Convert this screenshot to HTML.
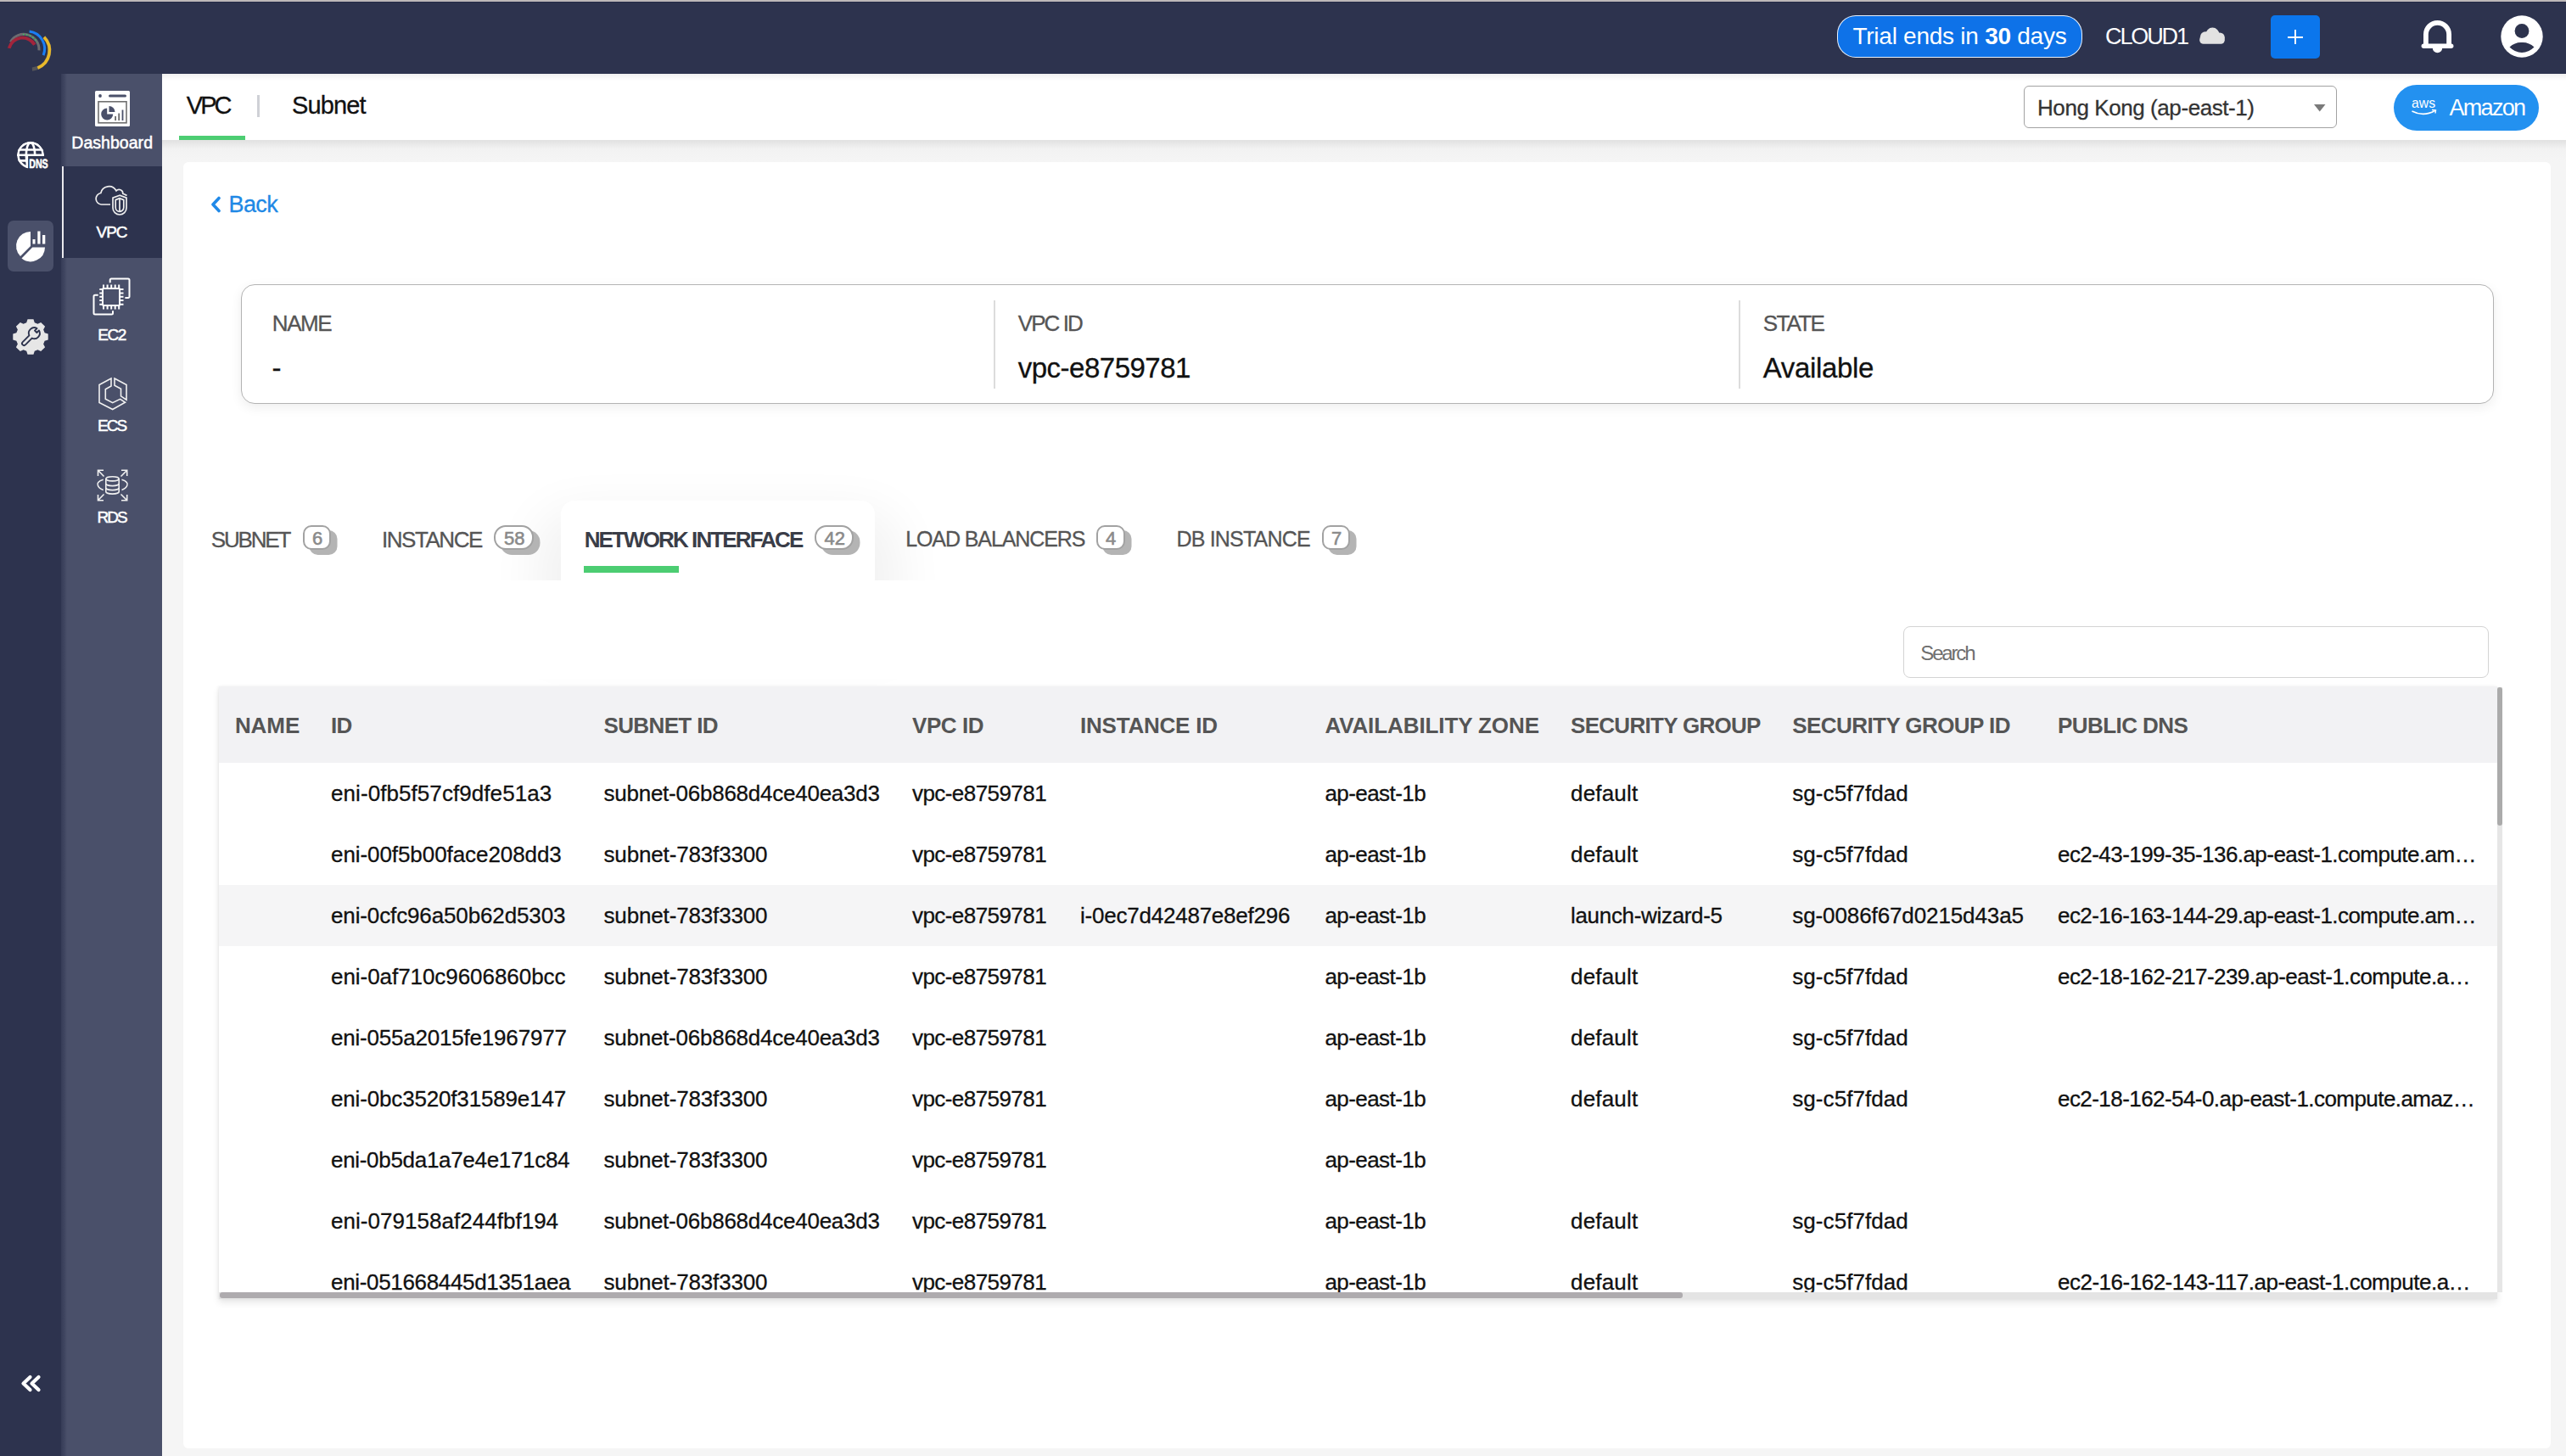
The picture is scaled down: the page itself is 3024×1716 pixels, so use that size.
<!DOCTYPE html>
<html><head><meta charset="utf-8"><style>
html,body{margin:0;padding:0;}
body{width:3024px;height:1716px;position:relative;overflow:hidden;background:#f5f5f5;font-family:"Liberation Sans",sans-serif;}
.t{position:absolute;white-space:nowrap;}
svg{overflow:visible}
</style></head><body>
<div style="position:absolute;left:0px;top:0px;width:3024px;height:2px;background:#bdb8b9"></div>
<div style="position:absolute;left:0px;top:2px;width:3024px;height:85px;background:#2d334e"></div>
<div style="position:absolute;left:0px;top:2px;width:3024px;height:1px;background:#242a46"></div>
<div style="position:absolute;left:0px;top:87px;width:72px;height:1629px;background:#2d334e"></div>
<div style="position:absolute;left:72px;top:87px;width:119px;height:1629px;background:#4a506a"></div>
<div style="position:absolute;left:72px;top:87px;width:7px;height:1629px;background:linear-gradient(90deg,#363c57,#3f4560 55%,#4a506a)"></div>
<div style="position:absolute;left:191px;top:87px;width:2833px;height:78px;background:#fff"></div>
<div style="position:absolute;left:191px;top:87px;width:2833px;height:8px;background:linear-gradient(#f0f0f0,#fff)"></div>
<div style="position:absolute;left:191px;top:165px;width:2833px;height:26px;background:linear-gradient(#e1e1e1,#f2f2f2 40%,#f5f5f5)"></div>
<div style="position:absolute;left:216px;top:191px;width:2790px;height:1516px;background:#fff;border-radius:6px"></div>
<svg style="position:absolute;left:0px;top:0px" width="72" height="87" viewBox="0 0 72 87"><path d="M12.4 49.4 A18 18 0 0 1 46 59.3" stroke="#6c6c70" stroke-width="3" fill="none"/><path d="M27 40.6 A18 18 0 0 1 44 50" stroke="#39c463" stroke-width="1.6" fill="none" stroke-dasharray="1.5 2.5"/><path d="M10.7 56.9 A16.4 16.4 0 0 1 40.8 52.7" stroke="#a3243b" stroke-width="3.8" fill="none"/><path d="M34.6 37.1 A20.5 20.5 0 0 1 51.1 65.1" stroke="#1a7ef5" stroke-width="3" fill="none"/><path d="M51.9 43.7 A22.3 22.3 0 0 1 37.9 81.6" stroke="#555559" stroke-width="4.2" fill="none"/><path d="M51.9 43.7 A22.3 22.3 0 0 1 44.4 80.1" stroke="#e9b92a" stroke-width="3.6" fill="none"/></svg>
<div style="position:absolute;left:2165px;top:18px;width:289px;height:50px;background:#0e72e8;border:1.7px solid rgba(255,255,255,.9);border-radius:22px;box-sizing:border-box"></div>
<div class="t" style="left:2183.5px;top:28.7px;font-size:28px;line-height:28px;color:#fff;font-weight:400;letter-spacing:-0.26px;">Trial ends in <b>30</b> days</div>
<div class="t" style="left:2481.0px;top:29.8px;font-size:27px;line-height:27px;color:#fff;font-weight:400;letter-spacing:-2.11px;">CLOUD1</div>
<svg style="position:absolute;left:2590px;top:32px" width="36" height="21" viewBox="0 0 36 21"><circle cx="17.4" cy="8.6" r="8" fill="#e2e2e2"/><circle cx="9" cy="11.2" r="6" fill="#e2e2e2"/><circle cx="26" cy="12.2" r="5.8" fill="#e2e2e2"/><rect x="2.2" y="10" width="29.6" height="9.8" rx="4.5" fill="#e2e2e2"/></svg>
<div style="position:absolute;left:2676px;top:18px;width:58px;height:51px;background:#0b76ec;border-radius:5px"></div>
<div style="position:absolute;left:2703.9px;top:35px;width:2.299999999999727px;height:17px;background:#fff"></div>
<div style="position:absolute;left:2696px;top:42.6px;width:18px;height:2.1000000000000014px;background:#fff"></div>
<svg style="position:absolute;left:2855px;top:24px" width="35" height="40" viewBox="0 0 35 40"><path d="M3.9 28 V16.5 A13.6 13.6 0 0 1 31.1 16.5 V28" stroke="#fff" stroke-width="5.8" fill="none"/><rect x="-1.4" y="27.5" width="37.8" height="5.5" rx="2.75" fill="#fff"/><path d="M11.8 32.5 A5.7 5.7 0 0 0 23.2 32.5 Z" fill="#fff"/></svg>
<svg style="position:absolute;left:2947px;top:18px" width="50" height="50" viewBox="0 0 50 50"><circle cx="25" cy="25" r="24.7" fill="#fff"/><circle cx="25" cy="18.5" r="8.4" fill="#2d334d"/><path d="M10.5 37.5 Q17 31.5 25 32 Q33 31.5 39.5 37.5 Q33 44 25 44 Q17 44 10.5 37.5 Z" fill="#2d334d"/></svg>
<div style="position:absolute;left:72px;top:196px;width:119px;height:108px;background:#2d334e"></div>
<div style="position:absolute;left:72.5px;top:196px;width:2.0px;height:108px;background:#e8e8ec"></div>
<svg style="position:absolute;left:112px;top:107px" width="41" height="42" viewBox="0 0 41 42"><rect x="0" y="0" width="41" height="42" rx="1.5" fill="#fff"/><circle cx="6" cy="6" r="1.9" fill="#4a506a"/><line x1="17.5" y1="6" x2="35.5" y2="6" stroke="#4a506a" stroke-width="3" stroke-linecap="round"/><rect x="4" y="12.8" width="33" height="25" fill="none" stroke="#707070" stroke-width="1.6"/><path d="M14.2 20.5 A7 7 0 1 0 21.2 27.5 H14.2 Z" fill="#4a506a"/><path d="M16.5 18 A7 7 0 0 1 23.5 25 H16.5 Z" fill="#4a506a"/><rect x="23.2" y="30" width="1.8" height="5" fill="#6a6a6a"/><rect x="27.3" y="26.5" width="1.8" height="8.5" fill="#6a6a6a"/><rect x="31.6" y="22.5" width="1.8" height="12.5" fill="#4a506a"/></svg>
<div class="t" style="left:84.3px;top:159.3px;font-size:19.5px;line-height:19.5px;color:#fff;font-weight:400;letter-spacing:0.037px;-webkit-text-stroke:0.5px #fff;">Dashboard</div>
<svg style="position:absolute;left:105px;top:210px" width="55" height="50" viewBox="0 0 55 50"><g fill="none" stroke="#eee" stroke-width="1.7"><path d="M25 31 H14.5 A6.8 6.8 0 0 1 13.8 17.5 A9.8 9.8 0 0 1 32 14.8 A4.5 4.5 0 0 1 39.8 18.2 Q42.5 19 44.5 20.5"/><path d="M36 20.2 L28 23.2 V35 A8 8 0 0 0 44 35 V23.2 Z"/><path d="M36 23.6 L31.2 25.6 V34.5 A4.8 4.8 0 0 0 40.8 34.5 V25.6 Z"/><path d="M36 23.6 V39.3"/></g></svg>
<div class="t" style="left:113.6px;top:263.7px;font-size:19px;line-height:19px;color:#fff;font-weight:400;letter-spacing:-1.122px;-webkit-text-stroke:0.5px #fff;">VPC</div>
<svg style="position:absolute;left:100px;top:320px" width="60" height="60" viewBox="0 0 60 60"><g fill="none" stroke="#fff" stroke-width="2"><rect x="21" y="20" width="20" height="20" rx="1"/><path d="M22 15.5 V20 M22 40 V44.5"/><path d="M26.6 15.5 V20 M26.6 40 V44.5"/><path d="M31.2 15.5 V20 M31.2 40 V44.5"/><path d="M35.7 15.5 V20 M35.7 40 V44.5"/><path d="M40.2 15.5 V20 M40.2 40 V44.5"/><path d="M17.3 21 H21 M41 21 H45.5"/><path d="M17.3 25.6 H21 M41 25.6 H45.5"/><path d="M17.3 29.8 H21 M41 29.8 H45.5"/><path d="M17.3 34 H21 M41 34 H45.5"/><path d="M17.3 38.7 H21 M41 38.7 H45.5"/><path d="M29.7 13.2 V10 A1.5 1.5 0 0 1 31.2 8.5 H51 A1.5 1.5 0 0 1 52.5 10 V29.5 A1.5 1.5 0 0 1 51 31 H47.4"/><path d="M15.7 27.8 H12 A1.5 1.5 0 0 0 10.5 29.3 V49 A1.5 1.5 0 0 0 12 50.5 H31.5 A1.5 1.5 0 0 0 33 49 V46.2"/></g></svg>
<div class="t" style="left:115.3px;top:385.2px;font-size:19px;line-height:19px;color:#fff;font-weight:400;letter-spacing:-1.528px;-webkit-text-stroke:0.5px #fff;">EC2</div>
<svg style="position:absolute;left:105px;top:435px" width="55" height="55" viewBox="0 0 55 55"><g fill="none" stroke="#f0f0f0" stroke-width="1.6" stroke-linejoin="miter"><path d="M26 11 L12 18.5 V39.5 L27.7 47.5 L42.5 39.3 L36.6 35.4 L27.7 39.6 L19.3 35.2 V23.8 L26 20 Z"/><path d="M30 11 L44 18.5 V36.2 L37.5 31.8 V23.3 L30 19.2 Z"/></g></svg>
<div class="t" style="left:114.9px;top:491.9px;font-size:19px;line-height:19px;color:#fff;font-weight:400;letter-spacing:-1.923px;-webkit-text-stroke:0.5px #fff;">ECS</div>
<svg style="position:absolute;left:105px;top:545px" width="55" height="55" viewBox="0 0 55 55"><g fill="none" stroke="#f0f0f0" stroke-width="1.6"><path d="M10.5 16 V9.3 H17 M10.5 9.3 L17.5 16.5"/><path d="M44.7 16 V9.3 H38 M44.7 9.3 L37.5 16.5"/><path d="M10.5 38 V44.8 H17 M10.5 44.8 L17.5 37.5"/><path d="M44.7 38 V44.8 H38 M44.7 44.8 L37.5 37.5"/><ellipse cx="27.5" cy="19.3" rx="7.7" ry="2.6"/><path d="M19.8 19.3 V34.5 A7.7 2.6 0 0 0 35.2 34.5 V19.3"/><path d="M19.8 25 A7.7 2.6 0 0 0 35.2 25 M19.8 30 A7.7 2.6 0 0 0 35.2 30"/><path d="M16.7 20.3 Q8 23 10.5 27.5 Q11.5 30.5 16.7 32.5 M38.5 20.3 Q47 23 44.7 27.5 Q43.5 30.5 38.5 32.5"/></g></svg>
<div class="t" style="left:114.6px;top:599.9px;font-size:19px;line-height:19px;color:#fff;font-weight:400;letter-spacing:-2.069px;-webkit-text-stroke:0.5px #fff;">RDS</div>
<svg style="position:absolute;left:10px;top:155px" width="50" height="50" viewBox="0 0 50 50"><defs><clipPath id="gc"><path d="M0 0 H50 V29 H22.7 V50 H0 Z"/></clipPath><clipPath id="gc2"><circle cx="26" cy="27.7" r="15.9"/></clipPath></defs><g clip-path="url(#gc2)"><g clip-path="url(#gc)" fill="none" stroke="#fff" stroke-width="2.6"><circle cx="26" cy="27.7" r="14.6"/><ellipse cx="26" cy="27.7" rx="5.2" ry="14.6"/><path d="M10 21.5 H42 M10 27.8 H42 M10 34.4 H42"/></g><rect x="20.5" y="28" width="2.6" height="20" fill="#fff"/></g><text x="24.2" y="42.6" font-family="Liberation Sans" font-weight="bold" font-size="15" fill="#fff" stroke="#fff" stroke-width="0.6" textLength="22.5" lengthAdjust="spacingAndGlyphs" style="text-rendering:geometricPrecision">DNS</text></svg>
<div style="position:absolute;left:9px;top:260px;width:54px;height:60px;background:#4a506a;border-radius:7px"></div>
<svg style="position:absolute;left:0px;top:0px" width="72" height="330" viewBox="0 0 72 330"><path d="M36 290 V273 A17 17 0 0 0 23.98 302.02 Z" fill="#fff"/><path d="M38.2 291.5 H53 A17 17 0 0 1 25.5 304.6 Z" fill="#fff"/><rect x="38.5" y="282" width="3" height="5.5" fill="#fff"/><rect x="44.3" y="272.5" width="3.2" height="15" fill="#fff"/><rect x="50" y="277" width="3.3" height="10.5" fill="#fff"/></svg>
<svg style="position:absolute;left:0px;top:340px" width="72" height="100" viewBox="0 340 72 100"><polygon points="31.23,380.37 32.53,376.29 39.47,376.29 40.77,380.37 44.39,381.87 48.19,379.90 53.10,384.81 51.13,388.61 52.63,392.23 56.71,393.53 56.71,400.47 52.63,401.77 51.13,405.39 53.10,409.19 48.19,414.10 44.39,412.13 40.77,413.63 39.47,417.71 32.53,417.71 31.23,413.63 27.61,412.13 23.81,414.10 18.90,409.19 20.87,405.39 19.37,401.77 15.29,400.47 15.29,393.53 19.37,392.23 20.87,388.61 18.90,384.81 23.81,379.90 27.61,381.87" fill="#e6e6e6"/><g transform="translate(36.8 396.2) rotate(45)"><path d="M-2.3 1.08 V12 A2.3 2.3 0 0 0 2.3 12 V1.08 A6.5 6.5 0 0 0 1.7 -11.27 V-7.6 H-1.7 V-11.27 A6.5 6.5 0 0 0 -2.3 1.08 Z" fill="#e6e6e6" stroke="#2d334d" stroke-width="1.9" stroke-linejoin="round"/></g></svg>
<svg style="position:absolute;left:0px;top:1600px" width="72" height="60" viewBox="0 1600 72 60"><path d="M35.5 1623 L27.5 1630.5 L35.5 1638 M45.5 1623 L37.5 1630.5 L45.5 1638" stroke="#fff" stroke-width="4.2" fill="none" stroke-linecap="round" stroke-linejoin="round"/></svg>
<div class="t" style="left:219.8px;top:110.0px;font-size:29px;line-height:29px;color:#111;font-weight:400;letter-spacing:-2.948px;-webkit-text-stroke:0.3px #111;">VPC</div>
<div style="position:absolute;left:303px;top:112px;width:3px;height:26px;background:#cfd1d6"></div>
<div class="t" style="left:344.0px;top:110.0px;font-size:29px;line-height:29px;color:#111;font-weight:400;letter-spacing:-0.866px;-webkit-text-stroke:0.3px #111;">Subnet</div>
<div style="position:absolute;left:211px;top:160px;width:78px;height:5px;background:#4ccd72"></div>
<div style="position:absolute;left:2385px;top:101px;width:369px;height:50px;border:1.6px solid #a2a2a2;border-radius:6px;box-sizing:border-box;background:#fff"></div>
<div class="t" style="left:2401.0px;top:114.2px;font-size:26px;line-height:26px;color:#333;font-weight:400;letter-spacing:-0.424px;-webkit-text-stroke:0.3px #333;">Hong Kong (ap-east-1)</div>
<svg style="position:absolute;left:2727px;top:123px" width="14" height="9" viewBox="0 0 14 9"><path d="M0 0 H13.5 L6.75 8.5 Z" fill="#7a7a7a"/></svg>
<div style="position:absolute;left:2821px;top:100px;width:171px;height:54px;background:#2391f0;border-radius:27px"></div>
<svg style="position:absolute;left:2842px;top:114px" width="30" height="24" viewBox="0 0 30 24"><text x="0" y="13" font-family="Liberation Sans" font-size="17" fill="#fff" textLength="28" lengthAdjust="spacingAndGlyphs">aws</text><path d="M0.5 17 Q14 24 27.5 16.5" stroke="#fff" stroke-width="1.6" fill="none"/><path d="M24 15.5 L28.5 15.8 L28 19.5" stroke="#fff" stroke-width="1.4" fill="none"/></svg>
<div class="t" style="left:2886.5px;top:114.1px;font-size:27px;line-height:27px;color:#fff;font-weight:400;letter-spacing:-1.704px;">Amazon</div>
<svg style="position:absolute;left:246px;top:230px" width="16" height="22" viewBox="0 0 16 22"><path d="M12 3.5 L5 11 L12 18.5" stroke="#2089e8" stroke-width="3.6" fill="none" stroke-linecap="round" stroke-linejoin="round"/></svg>
<div class="t" style="left:269.5px;top:228.1px;font-size:27px;line-height:27px;color:#1e88e5;font-weight:400;letter-spacing:-0.592px;-webkit-text-stroke:0.3px #1e88e5;">Back</div>
<div style="position:absolute;left:283.5px;top:335px;width:2655.0px;height:141px;border:1.3px solid #b3b3b3;border-radius:16px;box-sizing:border-box;background:#fff;box-shadow:0 4px 14px rgba(0,0,0,.07)"></div>
<div class="t" style="left:320.8px;top:367.8px;font-size:26px;line-height:26px;color:#555;font-weight:400;letter-spacing:-1.413px;-webkit-text-stroke:0.3px #555;">NAME</div>
<div class="t" style="left:320.5px;top:417.1px;font-size:33px;line-height:33px;color:#111;font-weight:400;letter-spacing:0px;-webkit-text-stroke:0.3px #111;">-</div>
<div style="position:absolute;left:1171px;top:354px;width:2px;height:104px;background:#dcdcdc"></div>
<div class="t" style="left:1199.7px;top:367.8px;font-size:26px;line-height:26px;color:#555;font-weight:400;letter-spacing:-1.902px;-webkit-text-stroke:0.3px #555;">VPC ID</div>
<div class="t" style="left:1199.7px;top:417.1px;font-size:33px;line-height:33px;color:#111;font-weight:400;letter-spacing:-0.494px;-webkit-text-stroke:0.3px #111;">vpc-e8759781</div>
<div style="position:absolute;left:2049px;top:354px;width:2px;height:104px;background:#dcdcdc"></div>
<div class="t" style="left:2077.8px;top:367.8px;font-size:26px;line-height:26px;color:#555;font-weight:400;letter-spacing:-1.738px;-webkit-text-stroke:0.3px #555;">STATE</div>
<div class="t" style="left:2077.8px;top:417.1px;font-size:33px;line-height:33px;color:#111;font-weight:400;letter-spacing:-0.352px;-webkit-text-stroke:0.3px #111;">Available</div>
<div style="position:absolute;left:661px;top:589.5px;width:370px;height:110.5px;background:#fff;border-radius:16px 16px 0 0;box-shadow:0 40px 60px 28px rgba(0,0,0,.055)"></div>
<div style="position:absolute;left:540px;top:684px;width:620px;height:116px;background:#fff"></div>
<div class="t" style="left:248.8px;top:622.5px;font-size:26px;line-height:26px;color:#555;font-weight:400;letter-spacing:-2.166px;-webkit-text-stroke:0.3px #555;">SUBNET</div>
<div style="position:absolute;left:357px;top:618.8px;width:33px;height:28.800000000000068px;border:2.5px solid #a2a2a2;border-radius:10px;box-sizing:border-box;background:#fff;box-shadow:7.5px 6px 0 0 #b4b4b4"></div>
<div class="t" style="left:367.9px;top:624.0px;font-size:22px;line-height:22px;color:#8a8a8a;font-weight:400;letter-spacing:0px;-webkit-text-stroke:0.6px #8a8a8a;">6</div>
<div class="t" style="left:450.0px;top:622.5px;font-size:26px;line-height:26px;color:#555;font-weight:400;letter-spacing:-1.464px;-webkit-text-stroke:0.3px #555;">INSTANCE</div>
<div style="position:absolute;left:582.4px;top:618.8px;width:46.60000000000002px;height:28.800000000000068px;border:2.5px solid #a2a2a2;border-radius:14px;box-sizing:border-box;background:#fff;box-shadow:7.5px 6px 0 0 #b4b4b4"></div>
<div class="t" style="left:594.0px;top:624.0px;font-size:22px;line-height:22px;color:#8a8a8a;font-weight:400;letter-spacing:0px;-webkit-text-stroke:0.6px #8a8a8a;">58</div>
<div class="t" style="left:688.7px;top:622.5px;font-size:26px;line-height:26px;color:#3a3d48;font-weight:700;letter-spacing:-1.891px;">NETWORK INTERFACE</div>
<div style="position:absolute;left:960.2px;top:618.8px;width:46.09999999999991px;height:28.800000000000068px;border:2.5px solid #a2a2a2;border-radius:14px;box-sizing:border-box;background:#fff;box-shadow:7.5px 6px 0 0 #b4b4b4"></div>
<div class="t" style="left:971.5px;top:624.0px;font-size:22px;line-height:22px;color:#8a8a8a;font-weight:400;letter-spacing:0px;-webkit-text-stroke:0.6px #8a8a8a;">42</div>
<div style="position:absolute;left:688px;top:666.7px;width:112px;height:8.5px;background:#4ccd72"></div>
<div class="t" style="left:1067.2px;top:623.1px;font-size:25px;line-height:25px;color:#555;font-weight:400;letter-spacing:-1.092px;-webkit-text-stroke:0.3px #555;">LOAD BALANCERS</div>
<div style="position:absolute;left:1292px;top:618.8px;width:33.5px;height:28.800000000000068px;border:2.5px solid #a2a2a2;border-radius:10px;box-sizing:border-box;background:#fff;box-shadow:7.5px 6px 0 0 #b4b4b4"></div>
<div class="t" style="left:1303.1px;top:624.0px;font-size:22px;line-height:22px;color:#8a8a8a;font-weight:400;letter-spacing:0px;-webkit-text-stroke:0.6px #8a8a8a;">4</div>
<div class="t" style="left:1386.4px;top:623.1px;font-size:25px;line-height:25px;color:#555;font-weight:400;letter-spacing:-0.805px;-webkit-text-stroke:0.3px #555;">DB INSTANCE</div>
<div style="position:absolute;left:1558px;top:618.8px;width:33px;height:28.800000000000068px;border:2.5px solid #a2a2a2;border-radius:10px;box-sizing:border-box;background:#fff;box-shadow:7.5px 6px 0 0 #b4b4b4"></div>
<div class="t" style="left:1568.9px;top:624.0px;font-size:22px;line-height:22px;color:#8a8a8a;font-weight:400;letter-spacing:0px;-webkit-text-stroke:0.6px #8a8a8a;">7</div>
<div style="position:absolute;left:2243.4px;top:738.3px;width:689.4000000000001px;height:60.40000000000009px;border:1.6px solid #d4d4d4;border-radius:8px;box-sizing:border-box;background:#fff"></div>
<div class="t" style="left:2263.3px;top:757.5px;font-size:24px;line-height:24px;color:#6f6f6f;font-weight:400;letter-spacing:-2.164px;">Search</div>
<div style="position:absolute;left:257.5px;top:809px;width:2685.5px;height:722px;background:#fff;box-shadow:0 4px 8px rgba(0,0,0,.10), -1px 0 3px rgba(0,0,0,.05)"></div>
<div style="position:absolute;left:257.5px;top:809px;width:2685.5px;height:90px;background:#f2f2f4"></div>
<div style="position:absolute;left:257.5px;top:1043px;width:2685.5px;height:72px;background:#f5f5f6"></div>
<div class="t" style="left:276.9px;top:841.8px;font-size:26px;line-height:26px;color:#555;font-weight:700;letter-spacing:-0.057px;">NAME</div>
<div class="t" style="left:390.0px;top:841.8px;font-size:26px;line-height:26px;color:#555;font-weight:700;letter-spacing:-0.8px;">ID</div>
<div class="t" style="left:711.5px;top:841.8px;font-size:26px;line-height:26px;color:#555;font-weight:700;letter-spacing:-0.63px;">SUBNET ID</div>
<div class="t" style="left:1075.0px;top:841.8px;font-size:26px;line-height:26px;color:#555;font-weight:700;letter-spacing:-0.442px;">VPC ID</div>
<div class="t" style="left:1273.0px;top:841.8px;font-size:26px;line-height:26px;color:#555;font-weight:700;letter-spacing:-0.219px;">INSTANCE ID</div>
<div class="t" style="left:1561.4px;top:841.8px;font-size:26px;line-height:26px;color:#555;font-weight:700;letter-spacing:-0.101px;">AVAILABILITY ZONE</div>
<div class="t" style="left:1851.0px;top:841.8px;font-size:26px;line-height:26px;color:#555;font-weight:700;letter-spacing:-0.703px;">SECURITY GROUP</div>
<div class="t" style="left:2112.3px;top:841.8px;font-size:26px;line-height:26px;color:#555;font-weight:700;letter-spacing:-0.575px;">SECURITY GROUP ID</div>
<div class="t" style="left:2425.0px;top:841.8px;font-size:26px;line-height:26px;color:#555;font-weight:700;letter-spacing:-0.558px;">PUBLIC DNS</div>
<div style="position:absolute;left:257.5px;top:899px;width:2685.5px;height:624px;overflow:hidden">
<div class="t" style="left:132.5px;top:23.2px;font-size:26px;line-height:26px;color:#111;font-weight:400;letter-spacing:0.072px;-webkit-text-stroke:0.3px #111;">eni-0fb5f57cf9dfe51a3</div>
<div class="t" style="left:454.0px;top:23.2px;font-size:26px;line-height:26px;color:#111;font-weight:400;letter-spacing:-0.244px;-webkit-text-stroke:0.3px #111;">subnet-06b868d4ce40ea3d3</div>
<div class="t" style="left:817.5px;top:23.2px;font-size:26px;line-height:26px;color:#111;font-weight:400;letter-spacing:-0.561px;-webkit-text-stroke:0.3px #111;">vpc-e8759781</div>
<div class="t" style="left:1303.9px;top:23.2px;font-size:26px;line-height:26px;color:#111;font-weight:400;letter-spacing:-0.564px;-webkit-text-stroke:0.3px #111;">ap-east-1b</div>
<div class="t" style="left:1593.5px;top:23.2px;font-size:26px;line-height:26px;color:#111;font-weight:400;letter-spacing:0.189px;-webkit-text-stroke:0.3px #111;">default</div>
<div class="t" style="left:1854.8px;top:23.2px;font-size:26px;line-height:26px;color:#111;font-weight:400;letter-spacing:0.055px;-webkit-text-stroke:0.3px #111;">sg-c5f7fdad</div>
<div class="t" style="left:132.5px;top:95.2px;font-size:26px;line-height:26px;color:#111;font-weight:400;letter-spacing:-0.073px;-webkit-text-stroke:0.3px #111;">eni-00f5b00face208dd3</div>
<div class="t" style="left:454.0px;top:95.2px;font-size:26px;line-height:26px;color:#111;font-weight:400;letter-spacing:-0.15px;-webkit-text-stroke:0.3px #111;">subnet-783f3300</div>
<div class="t" style="left:817.5px;top:95.2px;font-size:26px;line-height:26px;color:#111;font-weight:400;letter-spacing:-0.561px;-webkit-text-stroke:0.3px #111;">vpc-e8759781</div>
<div class="t" style="left:1303.9px;top:95.2px;font-size:26px;line-height:26px;color:#111;font-weight:400;letter-spacing:-0.564px;-webkit-text-stroke:0.3px #111;">ap-east-1b</div>
<div class="t" style="left:1593.5px;top:95.2px;font-size:26px;line-height:26px;color:#111;font-weight:400;letter-spacing:0.189px;-webkit-text-stroke:0.3px #111;">default</div>
<div class="t" style="left:1854.8px;top:95.2px;font-size:26px;line-height:26px;color:#111;font-weight:400;letter-spacing:0.055px;-webkit-text-stroke:0.3px #111;">sg-c5f7fdad</div>
<div class="t" style="left:2167.5px;top:95.2px;font-size:26px;line-height:26px;color:#111;font-weight:400;letter-spacing:-0.551px;-webkit-text-stroke:0.3px #111;">ec2-43-199-35-136.ap-east-1.compute.am…</div>
<div class="t" style="left:132.5px;top:167.2px;font-size:26px;line-height:26px;color:#111;font-weight:400;letter-spacing:-0.127px;-webkit-text-stroke:0.3px #111;">eni-0cfc96a50b62d5303</div>
<div class="t" style="left:454.0px;top:167.2px;font-size:26px;line-height:26px;color:#111;font-weight:400;letter-spacing:-0.15px;-webkit-text-stroke:0.3px #111;">subnet-783f3300</div>
<div class="t" style="left:817.5px;top:167.2px;font-size:26px;line-height:26px;color:#111;font-weight:400;letter-spacing:-0.561px;-webkit-text-stroke:0.3px #111;">vpc-e8759781</div>
<div class="t" style="left:1015.5px;top:167.2px;font-size:26px;line-height:26px;color:#111;font-weight:400;letter-spacing:-0.225px;-webkit-text-stroke:0.3px #111;">i-0ec7d42487e8ef296</div>
<div class="t" style="left:1303.9px;top:167.2px;font-size:26px;line-height:26px;color:#111;font-weight:400;letter-spacing:-0.564px;-webkit-text-stroke:0.3px #111;">ap-east-1b</div>
<div class="t" style="left:1593.5px;top:167.2px;font-size:26px;line-height:26px;color:#111;font-weight:400;letter-spacing:-0.319px;-webkit-text-stroke:0.3px #111;">launch-wizard-5</div>
<div class="t" style="left:1854.8px;top:167.2px;font-size:26px;line-height:26px;color:#111;font-weight:400;letter-spacing:-0.105px;-webkit-text-stroke:0.3px #111;">sg-0086f67d0215d43a5</div>
<div class="t" style="left:2167.5px;top:167.2px;font-size:26px;line-height:26px;color:#111;font-weight:400;letter-spacing:-0.551px;-webkit-text-stroke:0.3px #111;">ec2-16-163-144-29.ap-east-1.compute.am…</div>
<div class="t" style="left:132.5px;top:239.2px;font-size:26px;line-height:26px;color:#111;font-weight:400;letter-spacing:-0.053px;-webkit-text-stroke:0.3px #111;">eni-0af710c9606860bcc</div>
<div class="t" style="left:454.0px;top:239.2px;font-size:26px;line-height:26px;color:#111;font-weight:400;letter-spacing:-0.15px;-webkit-text-stroke:0.3px #111;">subnet-783f3300</div>
<div class="t" style="left:817.5px;top:239.2px;font-size:26px;line-height:26px;color:#111;font-weight:400;letter-spacing:-0.561px;-webkit-text-stroke:0.3px #111;">vpc-e8759781</div>
<div class="t" style="left:1303.9px;top:239.2px;font-size:26px;line-height:26px;color:#111;font-weight:400;letter-spacing:-0.564px;-webkit-text-stroke:0.3px #111;">ap-east-1b</div>
<div class="t" style="left:1593.5px;top:239.2px;font-size:26px;line-height:26px;color:#111;font-weight:400;letter-spacing:0.189px;-webkit-text-stroke:0.3px #111;">default</div>
<div class="t" style="left:1854.8px;top:239.2px;font-size:26px;line-height:26px;color:#111;font-weight:400;letter-spacing:0.055px;-webkit-text-stroke:0.3px #111;">sg-c5f7fdad</div>
<div class="t" style="left:2167.5px;top:239.2px;font-size:26px;line-height:26px;color:#111;font-weight:400;letter-spacing:-0.548px;-webkit-text-stroke:0.3px #111;">ec2-18-162-217-239.ap-east-1.compute.a…</div>
<div class="t" style="left:132.5px;top:311.2px;font-size:26px;line-height:26px;color:#111;font-weight:400;letter-spacing:-0.204px;-webkit-text-stroke:0.3px #111;">eni-055a2015fe1967977</div>
<div class="t" style="left:454.0px;top:311.2px;font-size:26px;line-height:26px;color:#111;font-weight:400;letter-spacing:-0.244px;-webkit-text-stroke:0.3px #111;">subnet-06b868d4ce40ea3d3</div>
<div class="t" style="left:817.5px;top:311.2px;font-size:26px;line-height:26px;color:#111;font-weight:400;letter-spacing:-0.561px;-webkit-text-stroke:0.3px #111;">vpc-e8759781</div>
<div class="t" style="left:1303.9px;top:311.2px;font-size:26px;line-height:26px;color:#111;font-weight:400;letter-spacing:-0.564px;-webkit-text-stroke:0.3px #111;">ap-east-1b</div>
<div class="t" style="left:1593.5px;top:311.2px;font-size:26px;line-height:26px;color:#111;font-weight:400;letter-spacing:0.189px;-webkit-text-stroke:0.3px #111;">default</div>
<div class="t" style="left:1854.8px;top:311.2px;font-size:26px;line-height:26px;color:#111;font-weight:400;letter-spacing:0.055px;-webkit-text-stroke:0.3px #111;">sg-c5f7fdad</div>
<div class="t" style="left:132.5px;top:383.2px;font-size:26px;line-height:26px;color:#111;font-weight:400;letter-spacing:-0.164px;-webkit-text-stroke:0.3px #111;">eni-0bc3520f31589e147</div>
<div class="t" style="left:454.0px;top:383.2px;font-size:26px;line-height:26px;color:#111;font-weight:400;letter-spacing:-0.15px;-webkit-text-stroke:0.3px #111;">subnet-783f3300</div>
<div class="t" style="left:817.5px;top:383.2px;font-size:26px;line-height:26px;color:#111;font-weight:400;letter-spacing:-0.561px;-webkit-text-stroke:0.3px #111;">vpc-e8759781</div>
<div class="t" style="left:1303.9px;top:383.2px;font-size:26px;line-height:26px;color:#111;font-weight:400;letter-spacing:-0.564px;-webkit-text-stroke:0.3px #111;">ap-east-1b</div>
<div class="t" style="left:1593.5px;top:383.2px;font-size:26px;line-height:26px;color:#111;font-weight:400;letter-spacing:0.189px;-webkit-text-stroke:0.3px #111;">default</div>
<div class="t" style="left:1854.8px;top:383.2px;font-size:26px;line-height:26px;color:#111;font-weight:400;letter-spacing:0.055px;-webkit-text-stroke:0.3px #111;">sg-c5f7fdad</div>
<div class="t" style="left:2167.5px;top:383.2px;font-size:26px;line-height:26px;color:#111;font-weight:400;letter-spacing:-0.559px;-webkit-text-stroke:0.3px #111;">ec2-18-162-54-0.ap-east-1.compute.amaz…</div>
<div class="t" style="left:132.5px;top:455.2px;font-size:26px;line-height:26px;color:#111;font-weight:400;letter-spacing:-0.308px;-webkit-text-stroke:0.3px #111;">eni-0b5da1a7e4e171c84</div>
<div class="t" style="left:454.0px;top:455.2px;font-size:26px;line-height:26px;color:#111;font-weight:400;letter-spacing:-0.15px;-webkit-text-stroke:0.3px #111;">subnet-783f3300</div>
<div class="t" style="left:817.5px;top:455.2px;font-size:26px;line-height:26px;color:#111;font-weight:400;letter-spacing:-0.561px;-webkit-text-stroke:0.3px #111;">vpc-e8759781</div>
<div class="t" style="left:1303.9px;top:455.2px;font-size:26px;line-height:26px;color:#111;font-weight:400;letter-spacing:-0.564px;-webkit-text-stroke:0.3px #111;">ap-east-1b</div>
<div class="t" style="left:132.5px;top:527.2px;font-size:26px;line-height:26px;color:#111;font-weight:400;letter-spacing:0.031px;-webkit-text-stroke:0.3px #111;">eni-079158af244fbf194</div>
<div class="t" style="left:454.0px;top:527.2px;font-size:26px;line-height:26px;color:#111;font-weight:400;letter-spacing:-0.244px;-webkit-text-stroke:0.3px #111;">subnet-06b868d4ce40ea3d3</div>
<div class="t" style="left:817.5px;top:527.2px;font-size:26px;line-height:26px;color:#111;font-weight:400;letter-spacing:-0.561px;-webkit-text-stroke:0.3px #111;">vpc-e8759781</div>
<div class="t" style="left:1303.9px;top:527.2px;font-size:26px;line-height:26px;color:#111;font-weight:400;letter-spacing:-0.564px;-webkit-text-stroke:0.3px #111;">ap-east-1b</div>
<div class="t" style="left:1593.5px;top:527.2px;font-size:26px;line-height:26px;color:#111;font-weight:400;letter-spacing:0.189px;-webkit-text-stroke:0.3px #111;">default</div>
<div class="t" style="left:1854.8px;top:527.2px;font-size:26px;line-height:26px;color:#111;font-weight:400;letter-spacing:0.055px;-webkit-text-stroke:0.3px #111;">sg-c5f7fdad</div>
<div class="t" style="left:132.5px;top:599.2px;font-size:26px;line-height:26px;color:#111;font-weight:400;letter-spacing:-0.332px;-webkit-text-stroke:0.3px #111;">eni-051668445d1351aea</div>
<div class="t" style="left:454.0px;top:599.2px;font-size:26px;line-height:26px;color:#111;font-weight:400;letter-spacing:-0.15px;-webkit-text-stroke:0.3px #111;">subnet-783f3300</div>
<div class="t" style="left:817.5px;top:599.2px;font-size:26px;line-height:26px;color:#111;font-weight:400;letter-spacing:-0.561px;-webkit-text-stroke:0.3px #111;">vpc-e8759781</div>
<div class="t" style="left:1303.9px;top:599.2px;font-size:26px;line-height:26px;color:#111;font-weight:400;letter-spacing:-0.564px;-webkit-text-stroke:0.3px #111;">ap-east-1b</div>
<div class="t" style="left:1593.5px;top:599.2px;font-size:26px;line-height:26px;color:#111;font-weight:400;letter-spacing:0.189px;-webkit-text-stroke:0.3px #111;">default</div>
<div class="t" style="left:1854.8px;top:599.2px;font-size:26px;line-height:26px;color:#111;font-weight:400;letter-spacing:0.055px;-webkit-text-stroke:0.3px #111;">sg-c5f7fdad</div>
<div class="t" style="left:2167.5px;top:599.2px;font-size:26px;line-height:26px;color:#111;font-weight:400;letter-spacing:-0.494px;-webkit-text-stroke:0.3px #111;">ec2-16-162-143-117.ap-east-1.compute.a…</div>
</div>
<div style="position:absolute;left:2943px;top:810px;width:5.5px;height:713px;background:#e6e6e6"></div>
<div style="position:absolute;left:2943px;top:810px;width:5.5px;height:163px;background:#ababab;border-radius:3px"></div>
<div style="position:absolute;left:257.5px;top:1523px;width:2685.5px;height:8px;background:#e4e4e4"></div>
<div style="position:absolute;left:258.5px;top:1523.3px;width:1724.5px;height:6.2999999999999545px;background:#aeabae;border-radius:3px"></div>
</body></html>
